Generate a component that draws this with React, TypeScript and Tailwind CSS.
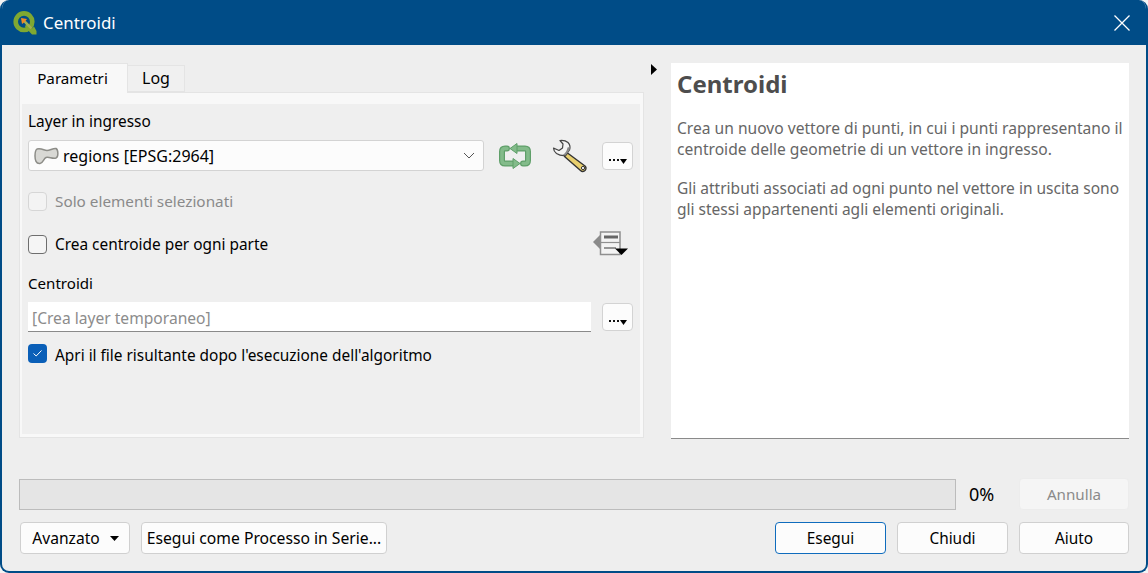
import React from "react";

function Logo() {
  return (
    <svg width="24" height="24" viewBox="0 0 24 24" className="shrink-0">
      <circle cx="11" cy="10.7" r="8.3" fill="none" stroke="#7fa832" strokeWidth="4.6" />
      <path d="M13 13 L18.5 18 L21 15.5 L23.5 20 L23.5 23.5 L19 23.5 L12 16 Z" fill="#7fa832" />
      <path d="M8 7 L14 8 L12.6 9.8 L19 16.5 L17.5 18 L11 11.5 L9 13 Z" fill="#f08a24" />
      <path d="M12.6 10 L19 16.5 L17.5 18 L11 11.5 Z" fill="#95b35a" />
    </svg>
  );
}

function SyncIcon() {
  return (
    <svg width="32" height="28" viewBox="0 0 32 28">
      <g fill="none" stroke="#5f9f69" strokeLinejoin="round" strokeLinecap="round">
        <path d="M18 6.5 H26 Q29 6.5 29 9.5 V18.5 Q29 21.5 26 21.5 H24" strokeWidth="6" />
        <path d="M14 21.5 H6 Q3 21.5 3 18.5 V9.5 Q3 6.5 6 6.5 H8" strokeWidth="6" />
      </g>
      <g fill="none" stroke="#83bb8a" strokeLinejoin="round" strokeLinecap="round">
        <path d="M18 6.5 H26 Q29 6.5 29 9.5 V18.5 Q29 21.5 26 21.5 H24" strokeWidth="3.6" />
        <path d="M14 21.5 H6 Q3 21.5 3 18.5 V9.5 Q3 6.5 6 6.5 H8" strokeWidth="3.6" />
      </g>
      <path d="M18 1.5 L11 6.5 L18 11.5 Z" fill="#83bb8a" stroke="#5f9f69" strokeLinejoin="round" />
      <path d="M14 16.5 L21 21.5 L14 26.5 Z" fill="#83bb8a" stroke="#5f9f69" strokeLinejoin="round" />
    </svg>
  );
}

function WrenchIcon() {
  return (
    <svg width="36" height="34" viewBox="0 0 36 34">
      <path d="M15.5 14 L33 27 Q35 29 33 31.5 Q30.5 33.5 28.5 31.5 L12.5 17.5 Z" fill="#e8cf6e" stroke="#333" strokeWidth="1.4" strokeLinejoin="round" />
      <circle cx="31" cy="29" r="1.6" fill="#fff" stroke="#333" />
      <path d="M8 1.5 Q13 1 16 3.5 Q19 6.5 17.5 11 L13.5 16.5 Q8.5 17 4.5 14.5 Q1.5 12 1.5 9 L7 11.5 L10.5 9 L11 5 Z" fill="#f4f4f4" stroke="#444" strokeWidth="1.2" strokeLinejoin="round" />
      <path d="M17.5 8 L17.5 11 L13.5 16.5 L10.5 16 Q14.5 14 15.5 8.5 Z" fill="#8a8a8a" />
    </svg>
  );
}

function LayerIcon() {
  return (
    <svg width="25" height="18" viewBox="0 0 25 18" className="shrink-0">
      <path d="M3 2 C8 1 10 3.5 13 3.5 C16 3.5 19 1 22 1.5 C24.5 3 24.5 10 22 11 C18 12 15 9.5 12 10.5 C9.5 11.5 9.5 16 6 16.5 C2 17 1 13 1 9 C1 6 1.5 3 3 2 Z" fill="#d8d8d4" stroke="#8d8d88" strokeWidth="1.5" strokeLinejoin="round" />
    </svg>
  );
}

function FieldIcon() {
  return (
    <svg width="36" height="26" viewBox="0 0 36 26">
      <path d="M8 3 L0 11 L8 19 Z" fill="#8a8a8a" />
      <rect x="7.5" y="1" width="19.5" height="22.5" fill="#f3f3f3" stroke="#8f8f8f" strokeWidth="1.5" />
      <path d="M8 11.5 H27" stroke="#8f8f8f" strokeWidth="1.2" />
      <path d="M11 6 H25" stroke="#666" strokeWidth="3" />
      <path d="M11 17 H23" stroke="#777" strokeWidth="1.5" />
      <path d="M22 17.5 H35 L28.5 24 Z" fill="#000" />
    </svg>
  );
}

function DotsButton({ className = "" }: { className?: string }) {
  return (
    <div className={"w-[31px] h-[28px] bg-[#fcfcfc] border border-[#d3d3d3] rounded-[4px] flex items-end justify-center pb-[8px] gap-[2px] " + className}>
      <span className="w-[2px] h-[2px] bg-[#111]" />
      <span className="w-[2px] h-[2px] bg-[#111]" />
      <span className="w-[2px] h-[2px] bg-[#111]" />
      <svg width="7" height="5" viewBox="0 0 7 5" className="-mb-[3px] -ml-[1px]"><path d="M0 0 H7 L3.5 5 Z" fill="#000" /></svg>
    </div>
  );
}

function Btn({ children, className = "" }: { children: React.ReactNode; className?: string }) {
  return (
    <div className={"h-[32px] bg-[#fcfcfc] border border-[#d0d0d0] rounded-[4px] flex items-center justify-center text-[#000] " + className}>
      {children}
    </div>
  );
}

export default function App() {
  return (
    <div
      className="w-[1148px] h-[573px] bg-[#f4f4f4] overflow-hidden text-[15.4px] leading-[21px] text-black"
      style={{ fontFamily: '"Noto Sans", "Open Sans", sans-serif' }}
    >
      <div className="w-full h-full flex flex-col rounded-[9px] overflow-hidden border-x-2 border-b-2 border-[#004c87] bg-[#eeeeee]">
        <div className="h-[45px] shrink-0 -mx-[2px] bg-[#004c87] flex items-center pl-[13px] pr-[17px] text-white">
          <Logo />
          <span className="ml-[6px] text-[16.9px]">Centroidi</span>
          <svg width="18" height="18" viewBox="0 0 18 18" className="ml-auto">
            <path d="M1.5 1.5 L16.5 16.5 M16.5 1.5 L1.5 16.5" stroke="#fff" strokeWidth="1.3" />
          </svg>
        </div>

        <div className="flex-1 flex flex-col pl-[17px] pr-[17px] pt-[18px]">
          <div className="flex h-[376px]">
            <div className="w-[625px] flex flex-col">
              <div className="flex h-[29px] items-end relative z-10">
                <div className="h-[30px] -mb-[1px] w-[109px] bg-[#f8f8f8] border border-b-0 border-[#e4e4e4] flex items-center justify-center pr-[2px] text-[15.2px]">Parametri</div>
                <div className="h-[27px] w-[57px] bg-[#f0f0f0] border border-l-0 border-[#e4e4e4] flex items-center justify-center text-[16px]">Log</div>
              </div>
              <div className="h-[346px] bg-[#f8f8f8] border border-[#e4e4e4] pl-[2px] pr-[3px] pt-[11px] pb-[3px]">
                <div className="h-full bg-[#efefef] pl-[6px] pr-[7px] pt-[7px]">
                  <div className="h-[21px]">Layer in ingresso</div>
                  <div className="flex items-center mt-[8px] h-[31px]">
                    <div className="w-[456px] h-[31px] bg-[#fcfcfc] border border-[#d3d3d3] rounded-[3px] flex items-center pl-[5px] pr-[8px] text-[16px]">
                      <LayerIcon />
                      <span className="ml-[4px] pt-[1px]">regions [EPSG:2964]</span>
                      <svg width="12" height="7" viewBox="0 0 12 7" className="ml-auto">
                        <path d="M1 1 L6 6 L11 1" fill="none" stroke="#555" strokeWidth="1" />
                      </svg>
                    </div>
                    <div className="ml-[15px] w-[32px]"><SyncIcon /></div>
                    <div className="ml-[21px] w-[36px]"><WrenchIcon /></div>
                    <DotsButton className="ml-[14px]" />
                  </div>
                  <label className="flex items-center h-[19px] mt-[21px] text-[#8a8a8a] text-[15.3px]">
                    <span className="w-[19px] h-[19px] rounded-[4px] border border-[#d6d6d6] bg-[#f3f3f3]" />
                    <span className="ml-[8px]">Solo elementi selezionati</span>
                  </label>
                  <div className="flex items-center h-[26px] mt-[20px] justify-between pr-[4px]">
                    <label className="flex items-center">
                      <span className="w-[19px] h-[19px] rounded-[4px] border border-[#6e6e6e] bg-[#f5f5f5]" />
                      <span className="ml-[8px]">Crea centroide per ogni parte</span>
                    </label>
                    <FieldIcon />
                  </div>
                  <div className="h-[21px] mt-[16px] text-[15.1px]">Centroidi</div>
                  <div className="flex items-center mt-[8px] h-[30px]">
                    <div className="w-[563px] h-[30px] bg-white border-b border-[#8a8a8a] flex items-center pl-[4px] pt-[3px] text-[#8c8c8c] text-[15.6px]">[Crea layer temporaneo]</div>
                    <DotsButton className="ml-[11px]" />
                  </div>
                  <label className="flex items-center h-[19px] mt-[12px]">
                    <span className="w-[19px] h-[19px] rounded-[4px] bg-[#0a5fb8] flex items-center justify-center">
                      <svg width="11" height="9" viewBox="0 0 11 9"><path d="M1.5 4.5 L4.2 7 L9.5 1.5" fill="none" stroke="#fff" strokeWidth="1" /></svg>
                    </span>
                    <span className="ml-[8px] pt-[3px]">Apri il file risultante dopo l'esecuzione dell'algoritmo</span>
                  </label>
                </div>
              </div>
            </div>

            <div className="w-[27px] pl-[7px] pt-[1px]">
              <svg width="6" height="11" viewBox="0 0 6 11" className="block"><path d="M0 0 L6 5.5 L0 11 Z" fill="#000" /></svg>
            </div>

            <div className="w-[458px] bg-white border-b border-[#8a8a8a] pl-[6px] pr-[4px] pt-[4px] text-[#666]">
              <h2 className="text-[24px] leading-[33px] font-bold text-[#4d4d4d]">Centroidi</h2>
              <p className="mt-[18px] text-[15.6px]">Crea un nuovo vettore di punti, in cui i punti rappresentano il centroide delle geometrie di un vettore in ingresso.</p>
              <p className="mt-[18px] text-[15.5px]">Gli attributi associati ad ogni punto nel vettore in uscita sono gli stessi appartenenti agli elementi originali.</p>
            </div>
          </div>

          <div className="flex items-center h-[32px] mt-[39px]">
            <div className="w-[937px] h-[31px] bg-[#e5e5e5] border border-[#bcbcbc]" />
            <span className="ml-[13px] w-[50px] text-[18px]">0%</span>
            <div className="w-[110px] h-[32px] bg-[#f5f5f5] border border-[#ececec] rounded-[4px] flex items-center justify-center text-[#8a8a8a] text-[15.2px] pt-[1px]">Annulla</div>
          </div>

          <div className="flex items-center mt-[12px]">
            <Btn className="w-[110px] ml-[1px] gap-[10px] text-[15.6px] pl-[1px]">
              <span>Avanzato</span>
              <svg width="9" height="5" viewBox="0 0 9 5"><path d="M0 0 H9 L4.5 5 Z" fill="#000" /></svg>
            </Btn>
            <Btn className="w-[246px] ml-[11px] text-[15.7px]">Esegui come Processo in Serie...</Btn>
            <Btn className="w-[111px] ml-auto !border-[#0f6cbd]">Esegui</Btn>
            <Btn className="w-[111px] ml-[11px]">Chiudi</Btn>
            <Btn className="w-[110px] ml-[11px]">Aiuto</Btn>
          </div>
        </div>
      </div>
    </div>
  );
}
